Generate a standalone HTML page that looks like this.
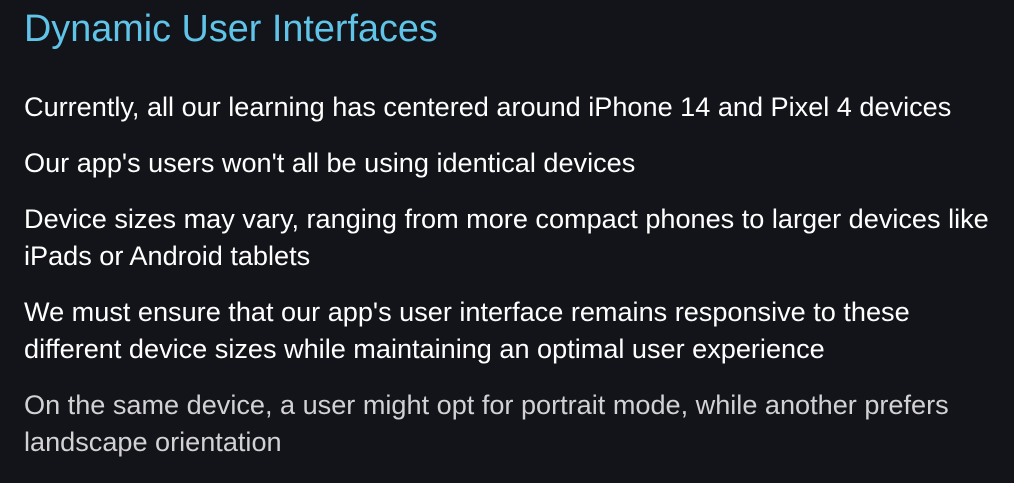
<!DOCTYPE html>
<html><head><meta charset="utf-8"><style>
html,body{margin:0;padding:0;background:#131419;width:1014px;height:483px;overflow:hidden}
body{font-family:"Liberation Sans",sans-serif;color:#fff}
h1{position:absolute;left:24px;top:7px;margin:0;font-weight:normal;font-size:37.8px;line-height:44px;color:#5fc4e8}
p{position:absolute;left:24px;margin:0;font-size:27.1px;line-height:37px;width:975px}
</style></head><body>
<h1>Dynamic User Interfaces</h1>
<p style="top:88px">Currently, all our learning has centered around iPhone 14 and Pixel 4 devices</p>
<p style="top:144px">Our app's users won't all be using identical devices</p>
<p style="top:200px">Device sizes may vary, ranging from more compact phones to larger devices like iPads or Android tablets</p>
<p style="top:293px">We must ensure that our app's user interface remains responsive to these different device sizes while maintaining an optimal user experience</p>
<p style="top:386px;color:#d2d2d4">On the same device, a user might opt for portrait mode, while another prefers landscape orientation</p>
</body></html>
